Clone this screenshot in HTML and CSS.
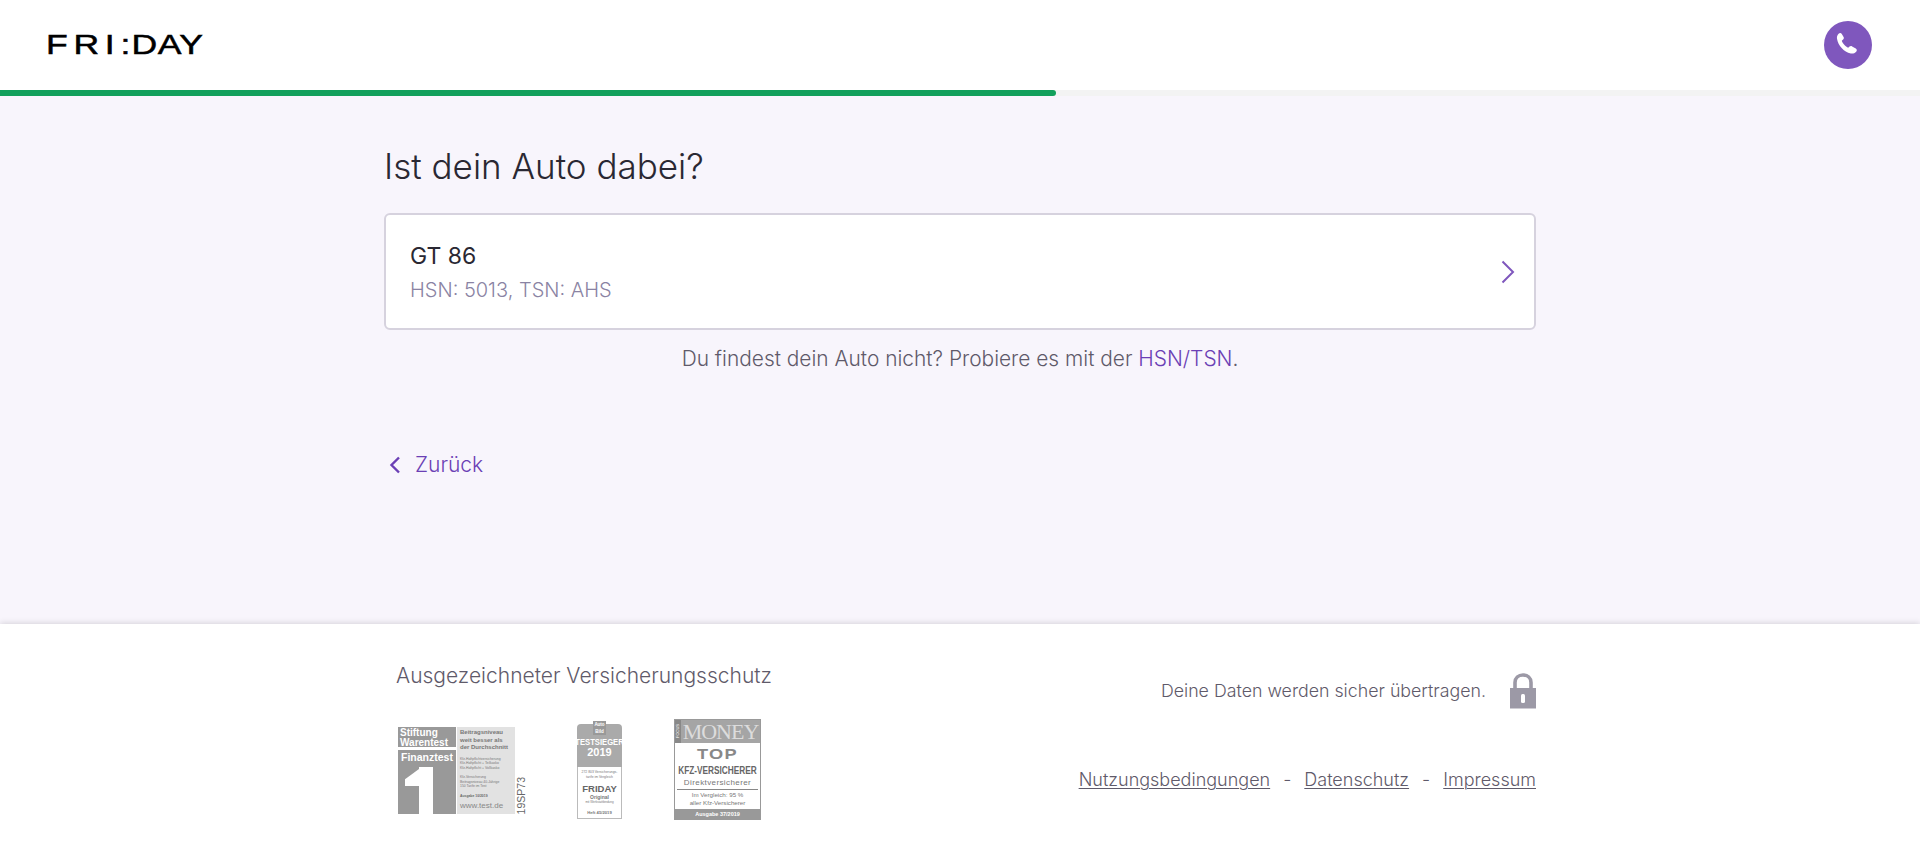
FILE: index.html
```html
<!DOCTYPE html>
<html lang="de">
<head>
<meta charset="utf-8">
<title>FRI:DAY</title>
<link rel="stylesheet" href="styles.css">
</head>
<body>
<header class="header">
  <div class="logo"><span class="logo-text"><span class="logo-fri">FRI</span><span class="logo-colon">:</span><span class="logo-day">DAY</span></span></div>
  <a class="phone" href="#" aria-label="Telefon">
    <svg width="48" height="48" viewBox="0 0 48 48">
      <circle cx="24" cy="24" r="24" fill="#7f57bd"/>
      <path d="M14.600 12.800c1-1 2.500-.9 3.200.2l1.800 3.100c.5.900.3 1.800-.5 2.500l-1.300 1.100c.6 2.300 3.900 6 6.400 7l1.300-1.100c.8-.7 1.800-.7 2.600-.2l3.700 2.200c1.200.7 1.400 2.100.4 3.100-1.400 1.500-3.400 2.200-5.400 1.800-7-1.500-12.700-8.200-13.800-14.800-.3-2 .4-3.700 1.600-4.900z" fill="#fff"/>
    </svg>
  </a>
</header>
<div class="progress"><div class="progress-bar"></div></div>
<main class="main">
  <h1 class="title">Ist dein Auto dabei?</h1>
  <a class="card" href="#">
    <div class="card-text">
      <div class="card-name">GT 86</div>
      <div class="card-sub">HSN: 5013, TSN: AHS</div>
    </div>
    <svg class="card-arrow" width="14" height="24" viewBox="0 0 14 24"><path d="M1.500 1.500 12 12 1.500 22.500" fill="none" stroke="#7f57bd" stroke-width="2"/></svg>
  </a>
  <p class="hint">Du findest dein Auto nicht? Probiere es mit der <a class="hint-link" href="#">HSN/TSN</a>.</p>
  <a class="back" href="#">
    <svg width="12" height="18" viewBox="0 0 12 18"><path d="M10 1.500 2.500 9l7.500 7.500" fill="none" stroke="#6b3fb5" stroke-width="2.400"/></svg>
    <span>Zurück</span>
  </a>
</main>
<footer class="footer">
  <div class="footer-inner">
    <section class="awards">
      <h2 class="awards-title">Ausgezeichneter Versicherungsschutz</h2>
      <div class="badges">
        <div class="ftest">
          <div class="ftest-left">
            <div class="ftest-head">Stiftung<br>Warentest</div>
            <div class="ftest-main">
              <span class="ftest-name">Finanztest</span>
              <span class="ftest-v"></span>
              <span class="ftest-h"></span>
            </div>
          </div>
          <div class="ftest-right">
            <div class="ftest-big">Beitragsniveau<br>weit besser als<br>der Durchschnitt</div>
            <div class="ftest-small">Kfz-Haftpflichtversicherung<br>Kfz-Haftpflicht + Teilkasko<br>Kfz-Haftpflicht + Vollkasko</div>
            <div class="ftest-small">Kfz-Versicherung<br>Beitragsniveau 40-Jährige<br>150 Tarife im Test</div>
            <div class="ftest-small ftest-issue">Ausgabe 10/2019</div>
            <div class="ftest-url">www.test.de</div>
          </div>
          <div class="ftest-code">19SP73</div>
        </div>
        <div class="bild">
          <div class="bild-logo">Auto<br>Bild</div>
          <div class="bild-top">
            <div class="bild-win">TESTSIEGER</div>
            <div class="bild-year">2019</div>
          </div>
          <div class="bild-body">
            <div class="bild-small">272 803 Versicherungs-<br>tarife im Vergleich</div>
            <div class="bild-name">FRIDAY</div>
            <div class="bild-orig">Original</div>
            <div class="bild-tiny">mit Werkstattbindung</div>
            <div class="bild-issue">Heft 45/2019</div>
          </div>
        </div>
        <div class="money">
          <div class="money-head"><span class="money-focus">FOCUS</span><span class="money-name">MONEY</span></div>
          <div class="money-body">
            <div class="money-top">TOP</div>
            <div class="money-kfz">KFZ-VERSICHERER</div>
            <div class="money-direct">Direktversicherer</div>
            <div class="money-cmp">Im Vergleich: 95 %<br>aller Kfz-Versicherer</div>
          </div>
          <div class="money-foot">Ausgabe 37/2019</div>
        </div>
      </div>
    </section>
    <section class="legal">
      <div class="secure">
        <span>Deine Daten werden sicher übertragen.</span>
        <svg width="26" height="36" viewBox="0 0 26 36"><path d="M5 16V9.500C5 5 8.500 2 13 2s8 3 8 7.500V16" fill="none" stroke="#9c99a6" stroke-width="3.600"/><path d="M0 15h26v20.500H0z" fill="#9c99a6"/><rect x="11" y="21" width="4" height="9" rx="1.500" fill="#fff"/></svg>
      </div>
      <nav class="links">
        <a href="#">Nutzungsbedingungen</a><span>-</span><a href="#">Datenschutz</a><span>-</span><a href="#">Impressum</a>
      </nav>
    </section>
  </div>
</footer>
</body>
</html>
```
FILE: styles.css
```css
* { box-sizing: border-box; }
html, body { margin: 0; height: 100%; }
body {
  font-family: Inter, "Noto Sans", sans-serif;
  background: #f8f5fc;
  color: #2a2833;
  overflow: hidden;
  display: flex;
  flex-direction: column;
  height: 849px;
}
a { color: inherit; text-decoration: none; }

.header {
  height: 90px;
  background: #fff;
  display: flex;
  align-items: center;
  justify-content: space-between;
  padding: 0 48px 0 46px;
}
.logo { width: 158px; height: 20px; }
.logo-text {
  display: block;
  width: 132px;
  font-family: "Liberation Sans", sans-serif;
  font-size: 28px;
  line-height: 20px;
  color: #000;
  white-space: nowrap;
  -webkit-text-stroke: .5px #000;
  transform: scaleX(1.27);
  transform-origin: left center;
}
.logo-fri { letter-spacing: 4.500px; }
.logo-colon { letter-spacing: 1px; }
.logo-day { letter-spacing: .4px; }
.phone { display: block; width: 48px; height: 48px; }

.progress { height: 6px; background: #f3f3f3; }
.progress-bar {
  width: 1056px;
  height: 6px;
  background: #12a05c;
  border-radius: 0 3px 3px 0;
}

.main {
  flex: 1;
  width: 1152px;
  margin: 0 auto;
}
.title {
  margin: 50px 0 0;
  font-size: 35px;
  line-height: 40px;
  font-weight: 300;
  color: #2a2833;
}
.card {
  margin-top: 27px;
  height: 117px;
  background: #fff;
  border: 2px solid #d6d2de;
  border-radius: 6px;
  display: flex;
  align-items: center;
  justify-content: space-between;
  padding: 0 19px 0 24px;
}
.card-text { padding-top: 2px; }
.card-name { font-size: 23px; line-height: 28px; font-weight: 400; color: #2a2833; }
.card-sub { margin-top: 7px; font-size: 20px; line-height: 26px; font-weight: 300; color: #8a83a3; }
.hint {
  margin: 16px 0 0;
  text-align: center;
  font-size: 20.900px;
  line-height: 26px;
  font-weight: 300;
  color: #5f5a6a;
}
.hint-link { color: #6b3fb5; }
.back {
  margin-top: 80px;
  display: flex;
  align-items: center;
  gap: 14px;
  width: max-content;
  padding-left: 5px;
  font-size: 21px;
  line-height: 26px;
  font-weight: 300;
  color: #6b3fb5;
}

.footer {
  height: 225px;
  flex: none;
  background: #fff;
  box-shadow: 0 -1px 6px rgba(0, 0, 0, .14);
}
.footer-inner {
  width: 1152px;
  margin: 0 auto;
  display: flex;
  justify-content: space-between;
}
.awards { padding-left: 12px; }
.awards-title {
  margin: 39px 0 0;
  font-size: 21px;
  line-height: 26px;
  font-weight: 300;
  color: #5f5a6a;
}
.badges {
  margin-top: 30px;
  display: flex;
  align-items: flex-start;
  color: #888;
}

/* Stiftung Warentest badge */
.ftest {
  width: 128px;
  height: 87px;
  margin-top: 8px;
  margin-left: 2px;
  display: flex;
  gap: 1px;
  font-family: "Liberation Sans", sans-serif;
}
.ftest-left { width: 58px; display: flex; flex-direction: column; gap: 3px; }
.ftest-head {
  height: 20px;
  background: #999;
  color: #fff;
  font-size: 10px;
  line-height: 9.500px;
  font-weight: 700;
  padding: 1px 2px;
  white-space: nowrap;
}
.ftest-main { flex: 1; background: #999; position: relative; overflow: hidden; }
.ftest-name { display: block; color: #fff; font-size: 10.500px; line-height: 12px; font-weight: 700; padding: 1px 3px; white-space: nowrap; }
.ftest-v { position: absolute; left: 21px; top: 17px; width: 14px; height: 50px; background: #fff; }
.ftest-h {
  position: absolute;
  left: 7px;
  top: 19px;
  width: 14px;
  height: 17px;
  background: #fff;
  clip-path: polygon(0 60%, 100% 0, 100% 100%, 0 100%);
}
.ftest-right {
  width: 58px;
  background: #e2e2e2;
  padding: 2px 3px;
  color: #777;
  overflow: hidden;
}
.ftest-big { font-size: 6px; line-height: 7.500px; font-weight: 700; white-space: nowrap; }
.ftest-small { font-size: 3.400px; line-height: 4.500px; margin-top: 5px; white-space: nowrap; }
.ftest-issue { font-weight: 700; color: #666; }
.ftest-url { font-size: 8px; line-height: 9px; margin-top: 3px; color: #888; }
.ftest-code {
  writing-mode: vertical-rl;
  transform: rotate(180deg);
  font-size: 10.500px;
  line-height: 10px;
  color: #666;
  align-self: flex-end;
}

/* Auto Bild badge */
.bild {
  width: 45px;
  height: 98px;
  margin-left: 51px;
  margin-top: 2px;
  font-family: "Liberation Sans", sans-serif;
  text-align: center;
  display: flex;
  flex-direction: column;
  position: relative;
  padding-top: 3px;
}
.bild-logo {
  position: absolute;
  top: 0;
  left: 16px;
  width: 13px;
  font-size: 4.500px;
  line-height: 7px;
  font-weight: 700;
  color: #fff;
  background: #999;
  white-space: nowrap;
}
.bild-top {
  height: 43px;
  background: #aaa;
  border-radius: 4px 4px 0 0;
  color: #fff;
  font-weight: 700;
  padding-top: 14px;
}
.bild-win { font-size: 9px; line-height: 9px; margin: 0 -6px; white-space: nowrap; transform: scaleX(.85); }
.bild-year { font-size: 11px; line-height: 11px; }
.bild-body { flex: 1; background: #fff; border: 1px solid #bbb; border-top: 0; color: #777; }
.bild-small { font-size: 3.400px; line-height: 5px; margin-top: 3px; white-space: nowrap; }
.bild-name { font-size: 9.500px; line-height: 11px; font-weight: 700; margin-top: 3px; color: #666; }
.bild-orig { font-size: 5px; line-height: 6px; font-weight: 700; }
.bild-tiny { font-size: 3px; line-height: 5px; white-space: nowrap; }
.bild-issue { font-size: 4.200px; line-height: 5px; font-weight: 700; margin-top: 5px; white-space: nowrap; }

/* Focus Money badge */
.money {
  width: 87px;
  height: 101px;
  margin-left: 52px;
  font-family: "Liberation Serif", serif;
  display: flex;
  flex-direction: column;
  text-align: center;
  border: 1px solid #999;
}
.money-head {
  height: 23px;
  background: #a5a5a5;
  display: flex;
  align-items: center;
  color: #dcdcdc;
}
.money-focus {
  font-family: "Liberation Sans", sans-serif;
  font-size: 4px;
  line-height: 6px;
  writing-mode: vertical-rl;
  transform: rotate(180deg);
  background: #888;
  color: #fff;
  height: 100%;
  width: 6px;
  text-align: center;
  flex: none;
}
.money-name { flex: 1; font-size: 22px; line-height: 23px; letter-spacing: -1px; white-space: nowrap; }
.money-body {
  flex: 1;
  background: #fff;
  font-family: "Liberation Sans", sans-serif;
  color: #888;
  padding-top: 4px;
}
.money-top { font-size: 14px; line-height: 14px; font-weight: 700; letter-spacing: 1px; transform: scaleX(1.3); }
.money-kfz { font-size: 11.500px; line-height: 13px; font-weight: 700; color: #666; white-space: nowrap; transform: scaleX(.72); margin: 3px -14px 0; }
.money-direct { font-size: 8px; line-height: 11px; color: #777; letter-spacing: .4px; border-bottom: 1px solid #888; margin: 0 2px; padding-bottom: 1px; }
.money-cmp { font-size: 6.200px; line-height: 8px; color: #777; margin-top: 1px; white-space: nowrap; }
.money-foot {
  height: 10px;
  background: #999;
  color: #fff;
  font-family: "Liberation Sans", sans-serif;
  font-size: 5.500px;
  line-height: 10px;
  font-weight: 700;
}

.legal { text-align: right; }
.secure {
  margin-top: 49px;
  display: flex;
  align-items: center;
  justify-content: flex-end;
  gap: 24px;
  font-size: 17.800px;
  line-height: 26px;
  font-weight: 300;
  color: #5f5a6a;
}
.links {
  margin-top: 58px;
  display: flex;
  justify-content: flex-end;
  gap: 13px;
  font-size: 18px;
  line-height: 26px;
  font-weight: 300;
  color: #5f5a6a;
}
.links a { text-decoration: underline; text-underline-offset: 2px; text-decoration-thickness: 1px; }
```
